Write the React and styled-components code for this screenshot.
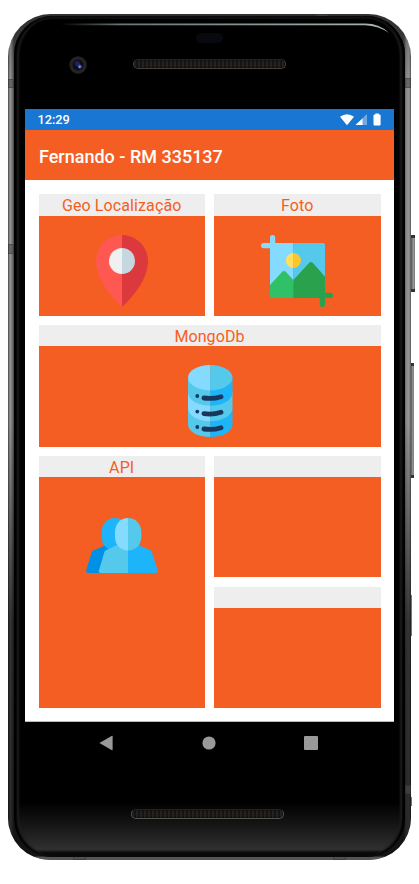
import React from "react";
import styled, { createGlobalStyle } from "styled-components";

const GlobalStyle = createGlobalStyle`
  * { box-sizing: border-box; }
  body { margin: 0; background: #fff; font-family: Roboto, sans-serif; overflow: hidden; }
`;

const Page = styled.main`
  width: 419px;
  height: 884px;
  padding: 14px 0 0 8px;
  background: #fff;
`;

const Phone = styled.div`
  position: relative;
  width: 403px;
  height: 846px;
  padding: 2px 6px 3px;
  border-radius: 43px 43px 42px 42px;
  background: linear-gradient(90deg, #444 0, #999 2px, #777 4px, #444 6px, #444 396px, #858585 398px, #999 401px, #555 403px);
  &::before {
    content: "";
    position: absolute;
    inset: 0;
    border-radius: inherit;
    background: linear-gradient(180deg, rgba(0, 0, 0, 0.3) 0, transparent 8%, transparent 48%, rgba(0, 0, 0, 0.65) 72%, rgba(0, 0, 0, 0.72) 99.5%, rgba(90, 90, 90, 0.8) 99.7%);
  }
`;

const Face = styled.div`
  position: relative;
  height: 841px;
  display: flex;
  flex-direction: column;
  align-items: center;
  border-radius: 39px 39px 38px 38px;
  background: linear-gradient(180deg, #000 93.5%, #181818 96.5%, #303030 99.1%, #090909 99.5%);
  box-shadow: inset 3px 0 2px #000, inset -3px 0 2px #000, inset 5px 0 2px #202020, inset -5px 0 2px #202020, inset 0 3px 1px #111;
`;

const GlassEdge = styled.svg`
  position: absolute;
  top: 6.5px;
  left: 43px;
`;

const TopBezel = styled.div`
  height: 93px;
  width: 369px;
  display: grid;
  grid-template-columns: 106px 156px 107px;
  grid-template-rows: 17px 11px 12px 20px;
`;

const Sensor = styled.div`
  grid-column: 2;
  grid-row: 2;
  justify-self: center;
  width: 27px;
  height: 10px;
  border-radius: 5px;
  background: #08090f;
`;

const Camera = styled.svg`
  grid-column: 1;
  grid-row: 4;
  margin: 0 0 0 44px;
`;

const Speaker = styled.div`
  grid-column: 2;
  grid-row: 4;
  margin: ${(p) => p.$margin};
  width: 153px;
  height: 10px;
  border: 1px solid ${(p) => p.$edge};
  border-top-color: #25221f;
  border-radius: 5px;
  background: repeating-linear-gradient(90deg, #26221f 0 2px, #171513 2px 4px);
  box-shadow: inset 0 0 2px #000;
`;

const Screen = styled.section`
  width: 369px;
  height: 613px;
  display: flex;
  flex-direction: column;
  background: #fff;
  border-bottom: 1px solid #bbb;
`;

const StatusBar = styled.header`
  height: 21px;
  flex: none;
  padding: 0 13px 0 12.5px;
  display: flex;
  align-items: center;
  justify-content: space-between;
  background: #1976d2;
  color: #fff;
  font-size: 12.7px;
  font-weight: 500;
`;

const AppBar = styled.div`
  height: 50px;
  flex: none;
  padding: 2px 14px 0;
  display: flex;
  align-items: center;
  background: #f55e22;
  color: #fff;
  font-size: 18px;
  font-weight: 500;
`;

const Tiles = styled.div`
  padding: 14px 13.5px 0;
  display: grid;
  grid-template-columns: 1fr 1fr;
  grid-template-rows: repeat(4, 121.7px);
  gap: 9.2px;
`;

const Tile = styled.article`
  grid-column: ${(p) => p.$column};
  grid-row: ${(p) => p.$row};
  display: flex;
  flex-direction: column;
  background: #f55e22;
`;

const TileTitle = styled.h2`
  margin: 0;
  height: 21.5px;
  flex: none;
  padding-top: 1px;
  background: #eee;
  color: #f55e22;
  font-size: 16px;
  font-weight: 400;
  line-height: 21px;
  text-align: center;
  letter-spacing: 0.1px;
`;

const TileBody = styled.div`
  display: flex;
  justify-content: center;
  padding-top: ${(p) => p.$top}px;
`;

const NavBar = styled.nav`
  width: 369px;
  height: 43px;
  padding-bottom: 1px;
  display: grid;
  grid-template-columns: 162px 44px 160px;
  align-items: center;
  justify-items: center;
`;

const SideButton = styled.div`
  position: absolute;
  left: 403px;
  top: ${(p) => p.$top}px;
  width: ${(p) => p.$width}px;
  height: ${(p) => p.$height}px;
  border: solid #333;
  border-width: ${(p) => (p.$capped ? "3px 0" : "0")};
  background: ${(p) => (p.$capped ? "linear-gradient(90deg, #555, #999 60%, #777)" : "#777")};
`;

const Seam = styled.i`
  position: absolute;
  left: ${(p) => p.$left}px;
  top: ${(p) => p.$top}px;
  width: ${(p) => p.$width}px;
  height: ${(p) => p.$height}px;
  background: rgba(75, 78, 78, 0.6);
  border: 1px solid rgba(20, 20, 20, 0.25);
`;

const PinIcon = () => (
  <svg width="72" height="72" viewBox="0 0 72 72">
    <path fill="#ff5752" d="M36 0A26 26 0 0 0 10 26C10 42 22 59 36 72Z" />
    <path fill="#db393d" d="M36 0A26 26 0 0 1 62 26C62 42 50 59 36 72Z" />
    <path fill="#f0f0f0" d="M36 13a13 13 0 0 0 0 26Z" />
    <path fill="#c5d8df" d="M36 13a13 13 0 0 1 0 26Z" />
  </svg>
);

const PhotoIcon = () => (
  <svg width="72" height="72" viewBox="0 0 72 72">
    <path fill="#85dbff" d="M9 8V2.6a2.6 2.6 0 0 1 5.2 0V8H32.4V50H9V13.2H2.6a2.6 2.6 0 0 1 0-5.2Z" />
    <path fill="#55c9ec" d="M32.4 8H62.4Q64 8 64 9.6V50H32.4Z" />
    <path fill="#ffdf5c" d="M32.4 18a7.5 7.5 0 0 0 0 15Z" />
    <path fill="#fec62e" d="M32.4 18a7.5 7.5 0 0 1 0 15Z" />
    <path fill="#30c067" d="M9 50 20.8 37.2Q23 35 25.2 37.2L32.4 45V63H11Q9 63 9 61Z" />
    <path fill="#2aa14c" d="M32.4 45 47.8 28.2Q50 26 52.2 28.2L64 41.7V57.8H69.4a2.6 2.6 0 0 1 0 5.2H64V69.4a2.6 2.6 0 0 1-5.2 0V63H32.4Z" />
  </svg>
);

const DatabaseIcon = () => (
  <svg width="72" height="72" viewBox="0 0 72 72">
    <path fill="#55c9ec" d="M14 42V59.5C14 66.5 24 72 36.2 72V42Z" />
    <path fill="#1eb4fa" d="M58.5 42V59.5C58.5 66.5 48.5 72 36.2 72V42Z" />
    <path fill="#85dbff" d="M14 27V43C14 50.5 24 56.2 36.2 56.2V27Z" />
    <path fill="#55c9ec" d="M58.5 27V43C58.5 50.5 48.5 56.2 36.2 56.2V27Z" />
    <path fill="#55c9ec" d="M14 12.5V27.5C14 35 24 40.7 36.2 40.7V12.5Z" />
    <path fill="#1eb4fa" d="M58.5 12.5V27.5C58.5 35 48.5 40.7 36.2 40.7V12.5Z" />
    <path fill="#85dbff" d="M36.2 0C24 0 14 5.6 14 12.5S24 25.4 36.2 25.4Z" />
    <path fill="#55c9ec" d="M36.2 0C48.5 0 58.5 5.6 58.5 12.5S48.5 25.4 36.2 25.4Z" />
    {[0, 15.6, 31].map((y) => (
      <g key={y} transform={`translate(0 ${y})`}>
        <circle cx="23.3" cy="31" r="1.9" fill="#17375c" />
        <path d="M29.9 33Q39 34.3 47 31.7" fill="none" stroke="#17375c" strokeWidth="4.8" strokeLinecap="round" />
      </g>
    ))}
  </svg>
);

const PeopleIcon = () => (
  <svg width="72" height="72" viewBox="0 0 72 72">
    <path fill="#0091e6" d="M20 35 6 41 .2 60.3Q-.4 63 2 63H28L38 35Z" />
    <path fill="#1eb4fa" d="M29 8C21 8 15.7 14 15.7 22V27C15.7 35 21 40.4 29 40.4S42 35 42 27V22C42 14 37 8 29 8Z" />
    <path fill="#55c9ec" d="M42 31 30.7 35.3 20 40.2Q18.8 40.8 18.4 42L13 60.3Q12.4 63 15 63H42Z" />
    <path fill="#1eb4fa" d="M42 31 53.3 35.3 64.4 40.2Q65.6 40.8 66 42L71.6 60.3Q72.2 63 69.6 63H42Z" />
    <path fill="#85dbff" d="M42 8C34.5 8 29 14 29 22V27C29 35 34.5 40.4 42 40.4Z" />
    <path fill="#55c9ec" d="M42 8C49.5 8 55.3 14 55.3 22V27C55.3 35 49.5 40.4 42 40.4Z" />
  </svg>
);

const StatusIcons = () => (
  <svg width="41" height="14" viewBox="0 0 41 14" fill="#fff">
    <path d="M0 3.7Q7-1.4 14 3.7L7 12.2Z" />
    <path opacity=".38" d="M27 1V12H15.5Z" />
    <path d="M22.5 5.5V12H15.5Z" />
    <path d="M35.4 1.6V.6H38.8V1.6H39.6Q40.6 1.6 40.6 2.6V11.4Q40.6 12.5 39.6 12.5H34.6Q33.5 12.5 33.5 11.4V2.6Q33.5 1.6 34.6 1.6Z" />
  </svg>
);

const tiles = [
  { title: "Geo Localização", column: "1", row: "1", icon: PinIcon, top: 19.5 },
  { title: "Foto", column: "2", row: "1", icon: PhotoIcon, top: 19.5 },
  { title: "MongoDb", column: "1 / 3", row: "2", icon: DatabaseIcon, top: 19 },
  { title: "API", column: "1", row: "3 / 5", icon: PeopleIcon, top: 32.5 },
  { title: "", column: "2", row: "3" },
  { title: "", column: "2", row: "4" },
];

export default function App() {
  return (
    <Page>
      <GlobalStyle />
      <Phone>
        <SideButton $top={221} $height={57} $width={4} $capped />
        <SideButton $top={349} $height={115} $width={3} $capped />
        <SideButton $top={581} $height={41} $width={1} />
        <SideButton $top={783} $height={9} $width={1} />
        <Seam $left={0} $top={65} $width={6} $height={9} />
        <Seam $left={0} $top={230} $width={6} $height={10} />
        <Seam $left={397} $top={64} $width={6} $height={10} />
        <Seam $left={397} $top={771} $width={6} $height={9} />
        <Seam $left={308} $top={0} $width={12} $height={4} />
        <Seam $left={65} $top={842} $width={13} $height={4} />
        <Seam $left={325} $top={842} $width={13} $height={4} />
        <Face>
          <GlassEdge width="336" height="14" viewBox="0 0 336 14">
            <defs>
              <linearGradient id="glass" x1="0" x2="1">
                <stop offset="0" stopColor="#69777a" stopOpacity="0" />
                <stop offset=".18" stopColor="#69777a" />
                <stop offset="1" stopColor="#a9b6b8" />
              </linearGradient>
            </defs>
            <path d="M4 .5H308Q323 .5 332 10Q322 3 308 2.3H4Z" fill="url(#glass)" />
          </GlassEdge>
          <TopBezel>
            <Sensor />
            <Camera width="18" height="18" viewBox="0 0 18 18">
              <circle cx="9" cy="9" r="8.7" fill="#242223" />
              <circle cx="9" cy="9" r="5.4" fill="#0c0d18" />
              <circle cx="8.3" cy="7.5" r="2.6" fill="#1b2360" />
              <circle cx="10.7" cy="10.6" r="2" fill="#4050b8" />
              <circle cx="10.8" cy="11" r=".8" fill="#b3b6ff" />
            </Camera>
            <Speaker $edge="#44403d" $margin="3px 0 0 2px" />
          </TopBezel>
          <Screen>
            <StatusBar>
              <span>12:29</span>
              <StatusIcons />
            </StatusBar>
            <AppBar>Fernando - RM 335137</AppBar>
            <Tiles>
              {tiles.map(({ title, column, row, icon: Icon, top }, i) => (
                <Tile key={i} $column={column} $row={row}>
                  <TileTitle>{title}</TileTitle>
                  {Icon && (
                    <TileBody $top={top}>
                      <Icon />
                    </TileBody>
                  )}
                </Tile>
              ))}
            </Tiles>
          </Screen>
          <NavBar>
            <svg width="14" height="16" viewBox="0 0 14 16">
              <path d="M.4 8 13 .8Q13.6.5 13.6 1.2V14.8Q13.6 15.5 13 15.2Z" fill="#999" />
            </svg>
            <svg width="14" height="14" viewBox="0 0 14 14">
              <circle cx="7" cy="7" r="6.6" fill="#999" />
            </svg>
            <svg width="14" height="14" viewBox="0 0 14 14">
              <rect width="14" height="14" rx="1" fill="#999" />
            </svg>
          </NavBar>
          <Speaker $edge="#55554f" $margin="44px 4px 0 0" />
        </Face>
      </Phone>
    </Page>
  );
}
